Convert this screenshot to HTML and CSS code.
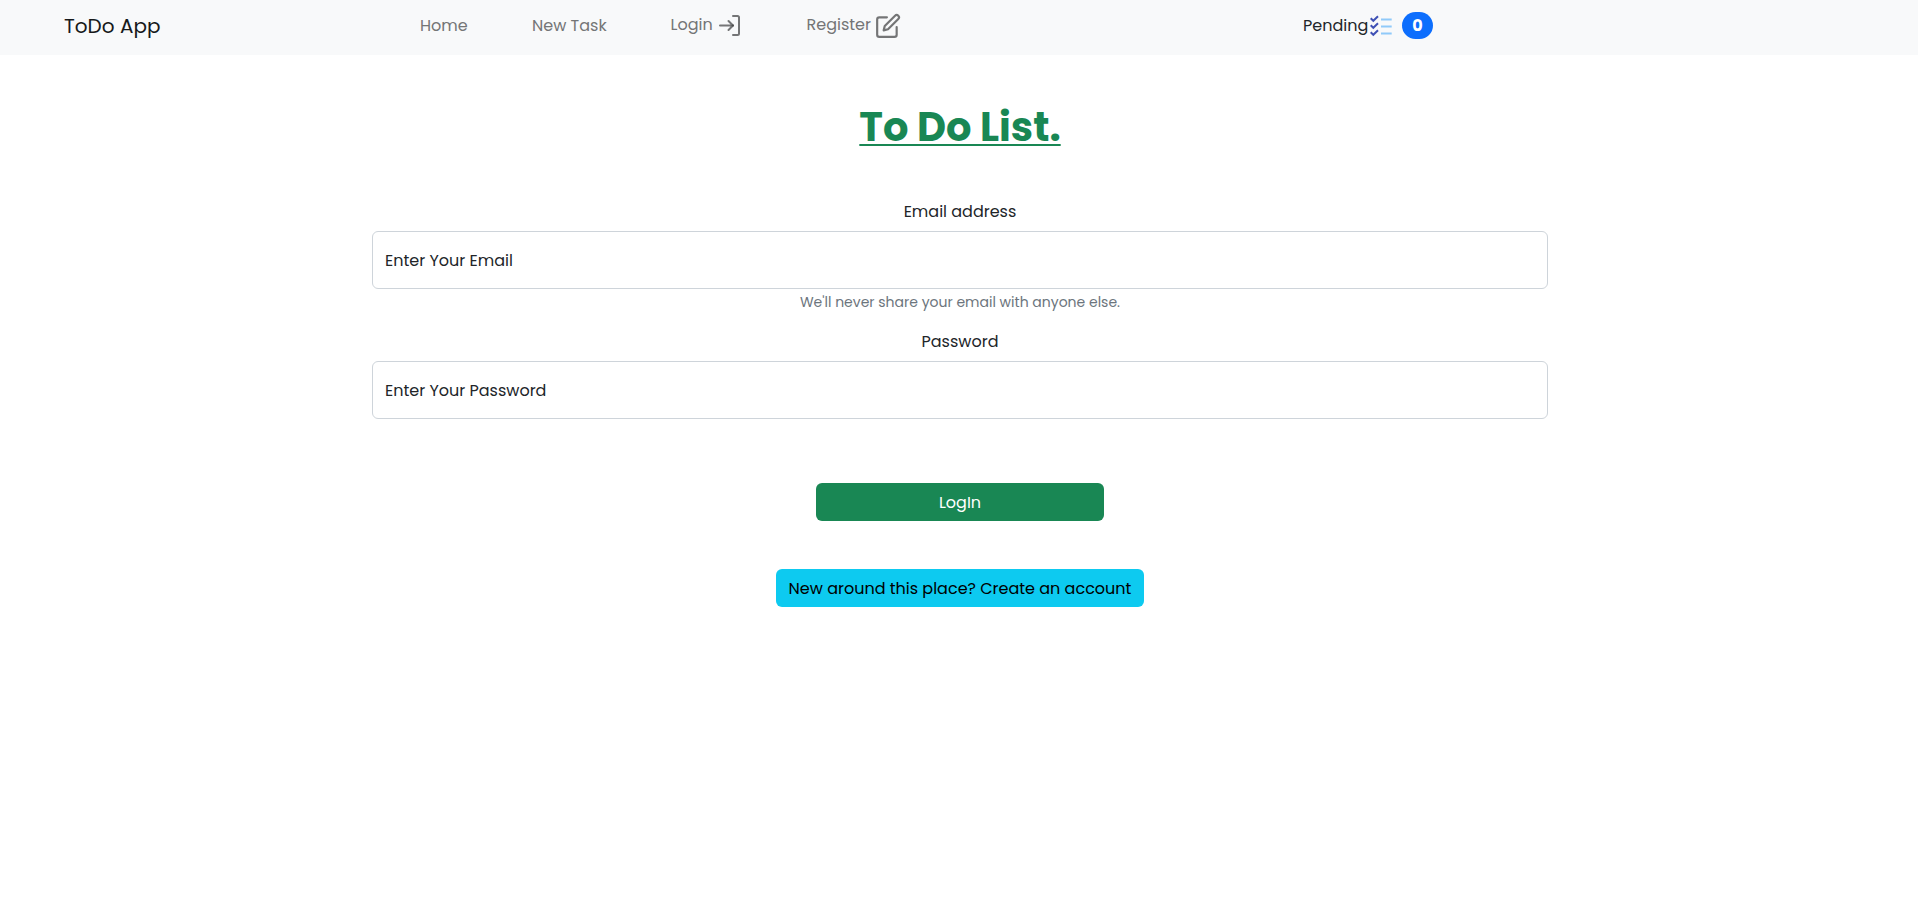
FILE: index.html
```
<!DOCTYPE html>
<html lang="en">
<head>
<meta charset="utf-8">
<title>ToDo App</title>
<link rel="stylesheet" href="styles.css">
</head>
<body>
<nav class="navbar">
  <a class="brand">ToDo App</a>
  <ul class="links">
    <li class="link home"><span>Home</span></li>
    <li class="link task"><span>New Task</span></li>
    <li class="link login"><span>Login</span>
      <svg class="icon" viewBox="0 0 24 24" width="24" height="24"><path d="M15 2h4.500a1.500 1.500 0 0 1 1.500 1.500v16a1.500 1.500 0 0 1-1.500 1.500H15M2 11.500h12.500M10.500 7l4.500 4.500-4.500 4.500"/><path class="tip" d="M14.500 11.500h.5"/></svg>
    </li>
    <li class="link register"><span>Register</span>
      <svg class="icon" viewBox="0 0 24 24" width="26" height="26"><path d="M11 4H4a2 2 0 0 0-2 2v14a2 2 0 0 0 2 2h14a2 2 0 0 0 2-2v-7"/><path d="M18.500 2.500a2.120 2.120 0 0 1 3 3L12 15l-4 1 1-4z"/></svg>
    </li>
  </ul>
  <div class="pending">
    <span class="pending-text">Pending</span>
    <svg class="list-icon" viewBox="0 0 24 24" width="24" height="24"><path class="lines" d="M12 5.500h10.700M12 12.500h10.700M12 19.500h10.700"/><path class="checks" d="M1.700 4.300l2.600 2.500L9 2.300M1.700 11.300l2.600 2.500L9 9.300M1.700 18.300l2.600 2.500L9 16.300"/></svg>
    <span class="badge">0</span>
  </div>
</nav>
<main class="content">
  <h1 class="title">To Do List.</h1>
  <form class="form">
    <label class="label">Email address</label>
    <div class="field"><span>Enter Your Email</span></div>
    <small class="help">We'll never share your email with anyone else.</small>
    <label class="label">Password</label>
    <div class="field"><span>Enter Your Password</span></div>
    <button type="button" class="btn submit">LogIn</button>
    <button type="button" class="btn create">New around this place? Create an account</button>
  </form>
</main>
</body>
</html>
```
FILE: styles.css
```
* { box-sizing: border-box; }
body {
  margin: 0;
  background: #fff;
  color: #212529;
  font-family: Poppins, Inter, "Noto Sans", sans-serif;
  font-size: 16px;
  line-height: 24px;
}
.navbar {
  display: flex;
  align-items: flex-start;
  height: 55px;
  padding-left: 64px;
  background: #f8f9fa;
  white-space: nowrap;
}
.brand { width: 356px; padding-top: 11px; font-size: 20px; line-height: 30px; color: #17191b; }
.links { display: flex; width: 883px; margin: 0; padding: 0; list-style: none; color: #747576; }
.link { display: flex; }
.link span { padding-top: 14px; }
.home { width: 112px; }
.task { width: 138.500px; }
.login { width: 136px; }
.login span, .register span { padding-top: 13px; }
.login span { width: 47.500px; }
.register span { width: 68.500px; }
.icon { fill: none; stroke: currentColor; stroke-width: 2; stroke-linecap: round; stroke-linejoin: round; }
.tip { stroke: #4c4d4e; }
.login .icon { margin-top: 14px; }
.register .icon { margin-top: 13px; }
.pending { display: flex; }
.pending-text { width: 66px; padding-top: 14px; }
.list-icon { margin-top: 14px; fill: none; stroke-width: 2; }
.lines { stroke: #90caf9; }
.checks { stroke: #3f51b5; }
.badge {
  width: 31px;
  height: 27px;
  margin: 12px 0 0 9px;
  border-radius: 14px;
  background: #0d6efd;
  color: #fff;
  font-weight: 700;
  line-height: 27px;
  text-align: center;
}
.content { width: 1176px; margin: 0 auto 0 372px; padding-top: 48px; text-align: center; }
.title {
  margin: 0;
  color: #198754;
  font-size: 40px;
  font-weight: 700;
  line-height: 48px;
  text-decoration: underline;
  text-decoration-thickness: 2px;
  text-underline-offset: 3px;
  text-decoration-skip-ink: none;
}
.form { display: flex; flex-direction: column; align-items: center; margin-top: 49px; }
.label { height: 31px; }
.field {
  display: flex;
  align-items: center;
  width: 1176px;
  height: 58px;
  padding: 2px 12px 0;
  border: 1px solid #ced4da;
  border-radius: 6px;
}
.help { height: 21px; margin: 3px 0 17px; color: #6c757d; font-size: 14px; line-height: 21px; }
.btn {
  height: 38px;
  padding: 1px 0 0;
  border: 0;
  border-radius: 6px;
  font: inherit;
  white-space: nowrap;
}
.submit { width: 288px; margin-top: 64px; background: #198754; color: #fff; }
.create { width: 368px; margin-top: 48px; background: #0dcaf0; color: #000; }
```
